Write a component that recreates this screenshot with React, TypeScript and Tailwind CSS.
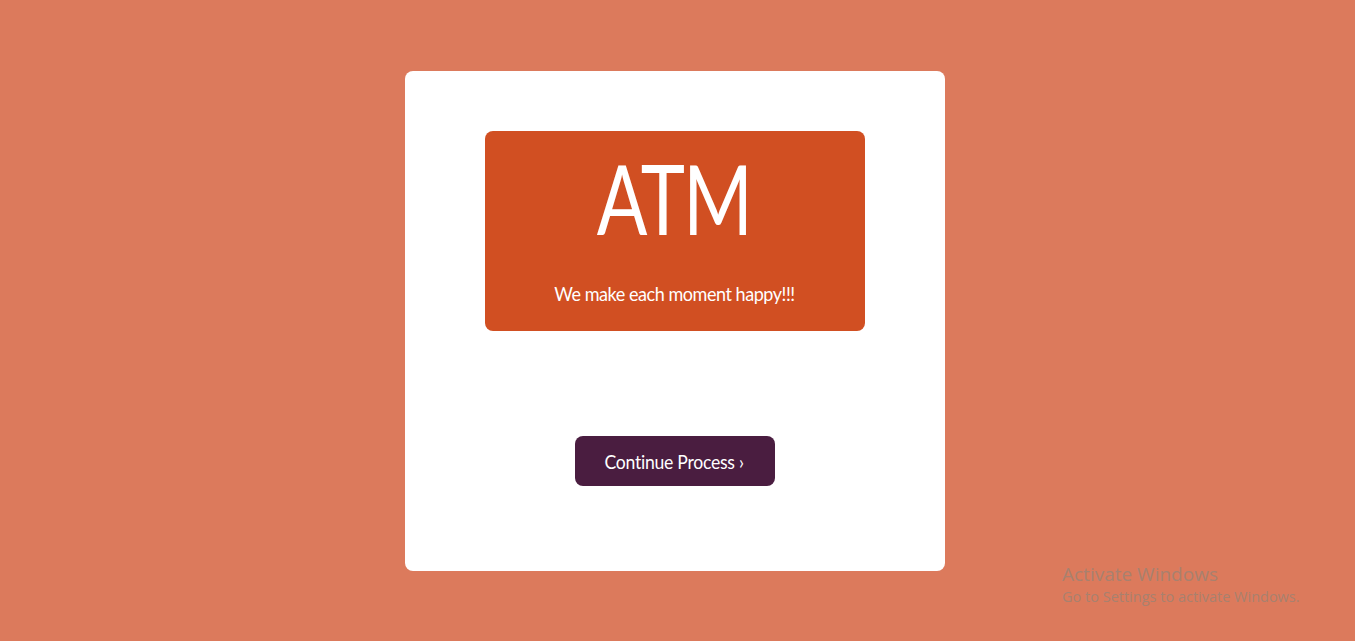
import React from 'react';

export default function App() {
  return (
    <div className="relative min-h-[641px] w-full bg-[#dc7a5c] flex items-center justify-center pr-[6px] font-['Lato',sans-serif]">
      <div className="w-[540px] h-[500px] bg-white rounded-lg flex flex-col items-center pt-[60px]">
        <div className="w-[380px] h-[200px] bg-[#d14f22] rounded-lg flex flex-col items-center text-white">
          <h1 className="mt-[12px] text-[96px] leading-[110px] font-normal tracking-[-2px] scale-x-[0.78]">ATM</h1>
          <p className="mt-[28px] text-[20px] leading-[24px] tracking-[-0.5px] scale-x-[0.9]">We make each moment happy!!!</p>
        </div>
        <button className="mt-[105px] w-[200px] h-[50px] rounded-lg bg-[#4a1d40] text-white text-[20px] tracking-[-0.3px] pt-[1px]">
          <span className="inline-block scale-x-[0.88]">Continue Process ›</span>
        </button>
      </div>

      {/* windows watermark */}
      <div className="absolute left-[1062px] top-[563px] text-[#a8816f] font-['Open_Sans',sans-serif] leading-tight pointer-events-none">
        <div className="text-[19px]">Activate Windows</div>
        <div className="text-[14.5px] mt-[1px]">Go to Settings to activate Windows.</div>
      </div>
    </div>
  );
}
